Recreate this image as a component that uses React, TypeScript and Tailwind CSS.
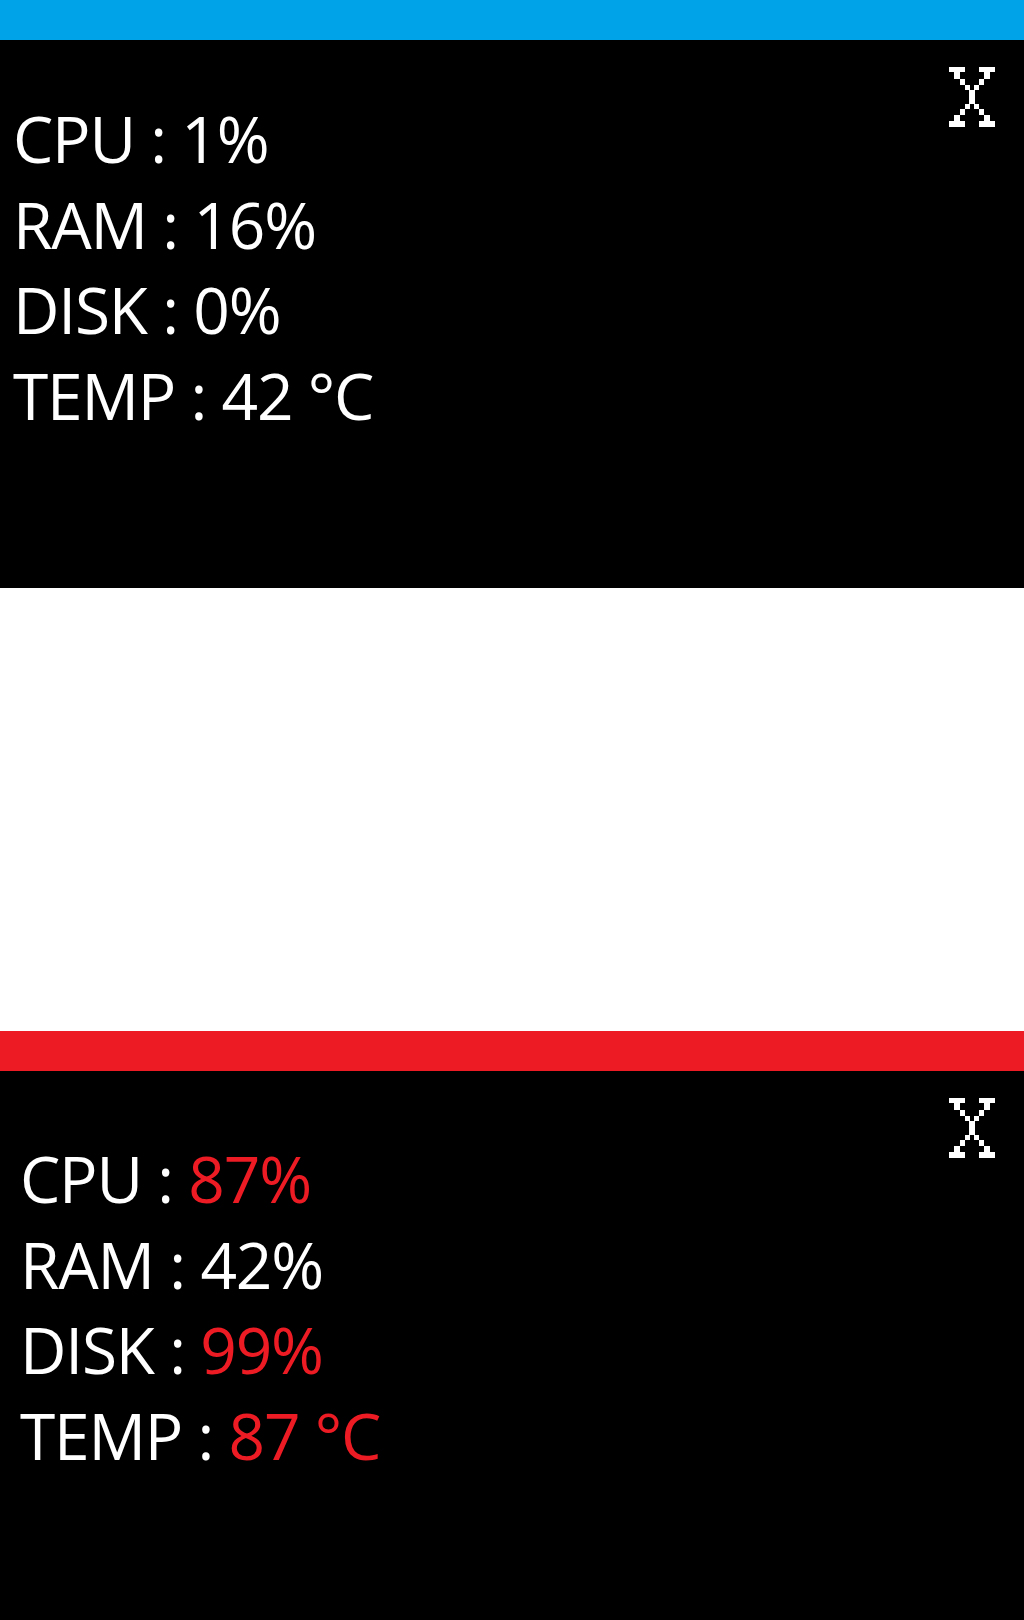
import React from 'react';

interface Stat {
  label: string;
  value: string;
  alert?: boolean;
}

// pixel style "X" close glyph
function CloseGlyph() {
  return (
    <svg width="46" height="60" viewBox="0 0 46 60" shapeRendering="crispEdges" fill="#fff">
      <rect x="0" y="0" width="16" height="5" />
      <rect x="30" y="0" width="16" height="5" />
      <rect x="5" y="5" width="6" height="7" />
      <rect x="35" y="5" width="6" height="7" />
      <rect x="11" y="12" width="5" height="6" />
      <rect x="30" y="12" width="5" height="6" />
      <rect x="16" y="18" width="5" height="5" />
      <rect x="25" y="18" width="5" height="5" />
      <rect x="20" y="23" width="6" height="14" />
      <rect x="16" y="37" width="5" height="5" />
      <rect x="25" y="37" width="5" height="5" />
      <rect x="11" y="42" width="5" height="6" />
      <rect x="30" y="42" width="5" height="6" />
      <rect x="5" y="48" width="6" height="6" />
      <rect x="35" y="48" width="6" height="6" />
      <rect x="0" y="54" width="16" height="6" />
      <rect x="30" y="54" width="16" height="6" />
    </svg>
  );
}

function Monitor({ accent, stats, padClass }: { accent: string; stats: Stat[]; padClass: string }) {
  return (
    <div className="flex flex-col">
      <div className={`h-[40px] w-full ${accent}`} />
      <div className={`relative bg-black text-white ${padClass}`}>
        <button className="absolute right-[29px] top-[27px]">
          <CloseGlyph />
        </button>
        {stats.map((s) => (
          <div key={s.label} className="text-[64px] leading-[85.5px] tracking-[-1.2px] whitespace-pre">
            {s.label} : <span className={s.alert ? 'text-[#ed1c24]' : ''}>{s.value}</span>
          </div>
        ))}
      </div>
    </div>
  );
}

export default function App() {
  const normal: Stat[] = [
    { label: 'CPU', value: '1%' },
    { label: 'RAM', value: '16%' },
    { label: 'DISK', value: '0%' },
    { label: 'TEMP', value: '42 °C' },
  ];
  const busy: Stat[] = [
    { label: 'CPU', value: '87%', alert: true },
    { label: 'RAM', value: '42%' },
    { label: 'DISK', value: '99%', alert: true },
    { label: 'TEMP', value: '87 °C', alert: true },
  ];

  return (
    <div className="w-[1024px] h-[1620px] bg-white flex flex-col" style={{ fontFamily: '"Open Sans", "Noto Sans", sans-serif' }}>
      <div className="h-[588px]">
        <Monitor accent="bg-[#00a2e8]" stats={normal} padClass="h-[548px] pl-[13px] pt-[56px]" />
      </div>
      <div className="h-[443px]" />
      <Monitor accent="bg-[#ed1c24]" stats={busy} padClass="h-[549px] pl-[20px] pt-[65px]" />
    </div>
  );
}
